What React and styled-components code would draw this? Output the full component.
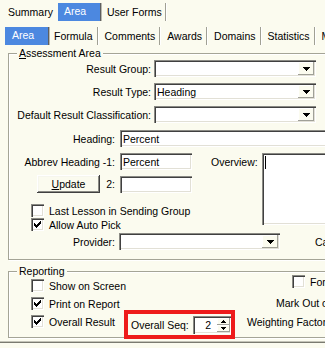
import React from "react";
import styled, { createGlobalStyle, css } from "styled-components";

const cream = "#fbfbef";

const GlobalStyle = createGlobalStyle`
  html, body { margin: 0; padding: 0; background: ${cream}; }
  body {
    font-family: "Liberation Sans", Arial, sans-serif;
    font-size: 10.5px;
    line-height: 12px;
    color: #000;
  }
  * { box-sizing: border-box; }
`;

const Window = styled.div`
  width: 325px;
  height: 348px;
  overflow: hidden;
  padding-top: 3px;
  background: ${cream};
`;

const TabRow = styled.div`
  display: flex;
  height: 18px;
  margin-top: ${p => p.$mt || 0}px;
  padding-left: ${p => p.$pl || 0}px;
  white-space: nowrap;
`;

const Tab = styled.div`
  flex: none;
  display: flex;
  align-items: center;
  height: 18px;
  width: ${p => (p.$w ? p.$w + "px" : "auto")};
  padding: 0 ${p => p.$pr ?? 4}px 0 ${p => p.$pl ?? 7}px;
  ${p => p.$sep && css`
    border-right: 1px solid #a0a094;
    box-shadow: 1px 0 0 #fff;
  `}
  ${p => p.$active && css`
    background: #4c88e0;
    color: #fff;
    padding-bottom: 3px;
    border-right: 1px solid #5e5e5e;
    box-shadow: 1px 0 0 #b8b8b0;
  `}
`;

const Panel = styled.div`
  padding-bottom: 3px;
  border-bottom: 1px solid #c4c4b8;
  box-shadow: 0 1px 0 #7a7a70;
`;

const Group = styled.fieldset`
  width: 480px;
  min-width: 0;
  margin: ${p => p.$mt}px 0 0 8px;
  padding: 0 0 ${p => p.$pb}px 0;
  border: 1px solid #a4a496;
  box-shadow: inset 1px 1px #fff, 1px 1px #fff;
`;

const Legend = styled.legend`
  margin-left: 8px;
  padding: 0 2px;
  height: 12px;
  line-height: 12px;
  background: ${cream};
`;

const Key = styled.span`
  text-decoration: underline;
`;

const Row = styled.div`
  display: flex;
  align-items: center;
  height: ${p => p.$h || 17}px;
  margin-top: ${p => p.$mt || 0}px;
  padding-left: ${p => p.$pl || 0}px;
  white-space: nowrap;
`;

const Label = styled.span`
  flex: none;
  width: ${p => (p.$w ? p.$w + "px" : "auto")};
  text-align: right;
  margin-right: ${p => p.$gap ?? 5}px;
`;

const sunken = css`
  background: #fff;
  box-shadow: inset 1px 1px #8a8a84, inset 2px 2px #404040,
    inset -1px -1px #fff, inset -2px -2px #e2e0d6;
`;

const Field = styled.div`
  flex: none;
  display: flex;
  align-items: ${p => (p.$top ? "flex-start" : "center")};
  width: ${p => p.$w}px;
  height: ${p => p.$h || 17}px;
  padding: ${p => (p.$top ? "3px" : "0")} ${p => p.$pr ?? 3}px 0 3px;
  overflow: hidden;
  white-space: nowrap;
  ${sunken}
`;

const FieldText = styled.span`
  flex: 1;
  text-align: ${p => (p.$right ? "right" : "left")};
  padding-right: ${p => (p.$right ? 6 : 0)}px;
`;

const DropButton = styled.div`
  flex: none;
  display: flex;
  align-items: center;
  justify-content: center;
  width: 16px;
  height: 13px;
  background: ${cream};
  box-shadow: inset -1px -1px #a0a098, inset 1px 1px #fff;
`;

const Caret = styled.span`
  width: 1px;
  height: 13px;
  background: #000;
`;

const PushButton = styled.div`
  flex: none;
  display: flex;
  align-items: center;
  justify-content: center;
  width: ${p => p.$w}px;
  height: 18px;
  margin-left: ${p => p.$ml || 0}px;
  background: ${cream};
  box-shadow: inset -1px -1px #404040, inset 1px 1px #fff,
    inset -2px -2px #8a8a84, inset 2px 2px #f6f6ee;
`;

const Split = styled.div`
  display: flex;
  align-items: flex-start;
  margin-top: ${p => p.$mt || 0}px;
`;

const LeftCol = styled.div`
  flex: none;
  width: ${p => p.$w}px;
`;

const SideLabel = styled.span`
  flex: none;
  display: flex;
  align-items: center;
  height: 17px;
  margin-right: 4px;
`;

const CheckItem = styled.div`
  display: flex;
  align-items: center;
  gap: 5px;
  height: 13px;
  margin-top: ${p => p.$mt || 0}px;
  padding-left: ${p => p.$pl || 0}px;
  white-space: nowrap;
`;

const Box = styled.span`
  flex: none;
  display: block;
  width: 13px;
  height: 13px;
  ${sunken}
`;

const TrailText = styled.span`
  margin-left: ${p => p.$ml}px;
  white-space: nowrap;
`;

const ReportBody = styled.div`
  display: flex;
  align-items: flex-start;
`;

const ReportLeft = styled.div`
  flex: none;
  display: grid;
  grid-template-columns: 115px 116px;
  grid-auto-rows: 13px;
  row-gap: 5px;
  margin-top: 2px;
`;

const ReportRight = styled.div`
  flex: none;
  width: 240px;
  margin-top: -2px;
`;

const SeqBox = styled.div`
  align-self: start;
  display: flex;
  align-items: center;
  width: 111px;
  height: 29px;
  margin-top: -5px;
  padding: 0 0 0 3px;
  border: 4px solid #ee1b1b;
  white-space: nowrap;
`;

const SpinField = styled.div`
  flex: none;
  display: flex;
  align-items: center;
  width: 38px;
  height: 18px;
  margin-left: auto;
  padding: 2px 1px 2px 2px;
  ${sunken}
`;

const SpinButtons = styled.div`
  flex: none;
  display: flex;
  flex-direction: column;
  width: 13px;
  height: 14px;
`;

const SpinHalf = styled.div`
  flex: 1;
  display: flex;
  align-items: center;
  justify-content: center;
  background: ${cream};
  box-shadow: inset -1px -1px #a0a098, inset 1px 1px #fff;
`;

const SmallArrow = ({ up }) => (
  <svg width="5" height="3" viewBox="0 0 5 3" shapeRendering="crispEdges">
    <path
      d={up ? "M2 0h1v1h1v1h1v1H0V2h1V1h1z" : "M0 0h5v1H4v1H3v1H2V2H1V1H0z"}
      fill="#000"
    />
  </svg>
);

const DropArrow = () => (
  <svg width="7" height="4" viewBox="0 0 7 4" shapeRendering="crispEdges">
    <path d="M0 0h7v1H6v1H5v1H4v1H3V3H2V2H1V1H0z" fill="#000" />
  </svg>
);

const Check = ({ checked }) => (
  <Box>
    {checked && (
      <svg width="13" height="13" viewBox="0 0 13 13" shapeRendering="crispEdges">
        <path
          d="M9 3h1v1h-1z M8 4h2v1h-2z M3 5h1v1h-1z M7 5h3v1h-3z M3 6h2v1h-2z M6 6h3v1h-3z M3 7h5v1h-5z M4 8h3v1h-3z M5 9h1v1h-1z"
          fill="#000"
        />
      </svg>
    )}
  </Box>
);

const Combo = ({ w, value }) => (
  <Field $w={w} $pr={2}>
    <FieldText>{value}</FieldText>
    <DropButton>
      <DropArrow />
    </DropButton>
  </Field>
);

export default function App() {
  return (
    <>
      <GlobalStyle />
      <Window>
        <TabRow $pl={3}>
          <Tab $pl={5} $pr={5}>Summary</Tab>
          <Tab $active $w={43} $pl={6}>Area</Tab>
          <Tab $sep $pl={6} $pr={3}>User Forms</Tab>
        </TabRow>
        <TabRow $mt={6} $pl={5}>
          <Tab $active $w={44} $pl={7}>Area</Tab>
          <Tab $sep $pl={5}>Formula</Tab>
          <Tab $sep>Comments</Tab>
          <Tab $sep>Awards</Tab>
          <Tab $sep>Domains</Tab>
          <Tab $sep>Statistics</Tab>
          <Tab>Marks</Tab>
        </TabRow>

        <Panel>
          <Group $mt={2} $pb={9}>
            <Legend><Key>A</Key>ssessment Area</Legend>
            <Row $mt={1}>
              <Label $w={142} $gap={3}>Result Group:</Label>
              <Combo w={162} />
            </Row>
            <Row $mt={6}>
              <Label $w={142} $gap={3}>Result Type:</Label>
              <Combo w={162} value="Heading" />
            </Row>
            <Row $mt={6}>
              <Label $w={142} $gap={3}>Default Result Classification:</Label>
              <Combo w={162} />
            </Row>
            <Row $mt={7}>
              <Label $w={106}>Heading:</Label>
              <Field $w={300}>Percent</Field>
            </Row>

            <Split $mt={6}>
              <LeftCol $w={202}>
                <Row>
                  <Label $w={106}>Abbrev Heading -1:</Label>
                  <Field $w={72}>Percent</Field>
                </Row>
                <Row $h={18} $mt={5}>
                  <PushButton $w={63} $ml={28}><Key>U</Key>pdate</PushButton>
                  <Label $w={15}>2:</Label>
                  <Field $w={72} />
                </Row>
                <CheckItem $mt={11} $pl={22}>
                  <Check />
                  Last Lesson in Sending Group
                </CheckItem>
                <CheckItem $mt={1} $pl={22}>
                  <Check checked />
                  Allow Auto Pick
                </CheckItem>
              </LeftCol>
              <SideLabel>Overview:</SideLabel>
              <Field $w={200} $h={72} $top>
                <Caret />
              </Field>
            </Split>

            <Row $mt={2}>
              <Label $w={106} $gap={4}>Provider:</Label>
              <Combo w={161} />
              <TrailText $ml={35}>Category:</TrailText>
            </Row>
          </Group>

          <Group $mt={5} $pb={7}>
            <Legend>Reporting</Legend>
            <ReportBody>
              <ReportLeft>
                <CheckItem $pl={22}>
                  <Check />
                  Show on Screen
                </CheckItem>
                <span />
                <CheckItem $pl={22}>
                  <Check checked />
                  Print on Report
                </CheckItem>
                <span />
                <CheckItem $pl={22}>
                  <Check checked />
                  Overall Result
                </CheckItem>
                <SeqBox>
                  Overall Seq:
                  <SpinField>
                    <FieldText $right>2</FieldText>
                    <SpinButtons>
                      <SpinHalf><SmallArrow up /></SpinHalf>
                      <SpinHalf><SmallArrow /></SpinHalf>
                    </SpinButtons>
                  </SpinField>
                </SeqBox>
              </ReportLeft>
              <ReportRight>
                <CheckItem $pl={52}>
                  <Check />
                  Force Result
                </CheckItem>
                <Row $mt={6} $pl={36}>
                  <Label $gap={4}>Mark Out of:</Label>
                  <Field $w={60} />
                </Row>
                <Row $mt={2} $pl={7}>
                  <Label $gap={4}>Weighting Factor:</Label>
                  <Field $w={60} />
                </Row>
              </ReportRight>
            </ReportBody>
          </Group>
        </Panel>
      </Window>
    </>
  );
}
